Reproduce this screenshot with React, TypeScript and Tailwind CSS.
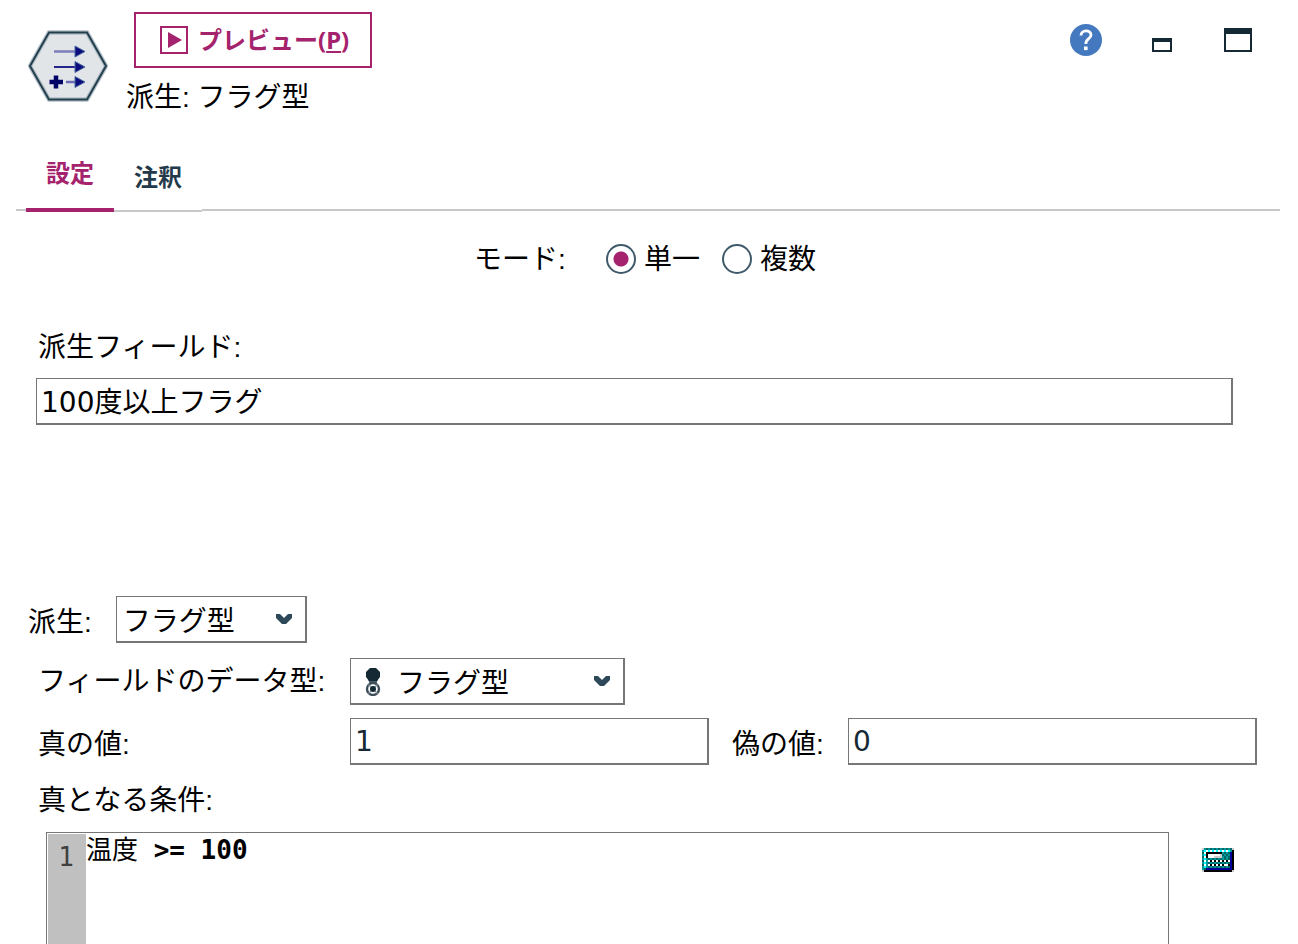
import { useState } from "react";
import type { ReactNode } from "react";

const FIELD =
  "h-[47px] w-full border border-r-2 border-b-2 border-[#767676] bg-white text-[28px] leading-[36px] outline-none";

/* ─── Icons ─── */
function DeriveIcon() {
  return (
    <svg className="h-[72px] w-20 shrink-0" viewBox="0 0 80 72" aria-hidden="true">
      <path d="M21 2.5H59L78 36L59 69.5H21L2 36Z" fill="#e1e5e8" stroke="#b4bec6" strokeWidth="4.500" />
      <path d="M21 2.5H59L78 36L59 69.5H21L2 36Z" fill="none" stroke="#23404f" strokeWidth="2" />
      <path d="M26 21.5H48" stroke="#7c7cba" strokeWidth="2.5" />
      <path d="M26 37H48" stroke="#24248a" strokeWidth="2" />
      <path d="M38 52H48" stroke="#6c6cb4" strokeWidth="2.5" />
      <path d="M47 16L57 21.5L47 27V16ZM47 31.500L57 37L47 42.500V31.500ZM47 46.500L57 52L47 57.500V46.500Z" fill="#0c0c7c" stroke="#4a6aa0" strokeWidth="1" />
      <path d="M21.500 52H35M28 45.500V58.500" stroke="#000066" strokeWidth="4.500" />
    </svg>
  );
}

function PreviewIcon() {
  return (
    <svg className="size-7 shrink-0" viewBox="0 0 28 28" aria-hidden="true">
      <rect x="1" y="1" width="26" height="26" fill="none" stroke="#a5226c" strokeWidth="2" />
      <path d="M8 6L22 14L8 22Z" fill="#a5226c" />
    </svg>
  );
}

function HelpIcon() {
  return (
    <svg className="size-8" viewBox="0 0 32 32" aria-hidden="true">
      <circle cx="16" cy="16" r="16" fill="#4479c0" />
      <path d="M11 11.500C11 5.500 21 5.500 21 11C21 15 15.800 14.500 15.800 20" fill="none" stroke="#fff" strokeWidth="2.800" />
      <rect x="14" y="22.500" width="3.600" height="3.600" fill="#fff" />
    </svg>
  );
}

function Chevron() {
  return (
    <svg className="h-[10px] w-4" viewBox="0 0 16 10" aria-hidden="true">
      <path d="M0 0H4L8 4L12 0H16V4L10 10H6L0 4Z" fill="#2c4859" />
    </svg>
  );
}

function FlagIcon() {
  return (
    <svg className="h-7 w-4" viewBox="0 0 16 28" aria-hidden="true">
      <path d="M3 11H13L11 17H5Z" fill="#4a5c66" />
      <path d="M5 0H11L15 4V9L12 13H4L1 9V4Z" fill="#152935" />
      <circle cx="8" cy="21" r="6" fill="#fff" stroke="#3c4d58" strokeWidth="2.400" />
      <path d="M3.500 16.500L12.500 25.500M12.500 16.500L3.500 25.500" stroke="#8a969e" strokeWidth="1.200" />
      <circle cx="8" cy="21" r="3" fill="#152935" />
    </svg>
  );
}

const CALC_COLORS: Record<string, string> = {
  g: "#cccccc",
  t: "#009999",
  d: "#006666",
  c: "#00ffff",
  w: "#ffffff",
  k: "#000000",
  b: "#000099",
};

// one character per pixel
const CALC_ROWS = [
  "gtdtdtdtdtdtdtdg",
  "tcwcwcwcwcwcwctk",
  "dwkkkkkkkktdtdbk",
  "tckwwwwwwgdtdtbk",
  "dwkwwwggggtdtdbk",
  "tctdtdtdtdtdtdbk",
  "dwtwkwkwkwkwkwbk",
  "tctdtdtdtdtdtdbk",
  "dwtwkwkwkwkwwkbk",
  "tctdtdtdtdtdtdbk",
  "tdbbbbbbbbbbbbbk",
  "gkkkkkkkkkkkkkkg",
];

function CalculatorIcon() {
  return (
    <svg className="h-6 w-8" viewBox="0 0 16 12" shapeRendering="crispEdges" aria-hidden="true">
      {CALC_ROWS.map((row, y) =>
        row.split("").map((c, x) => (
          <rect key={`${x}-${y}`} x={x} y={y} width="1" height="1" fill={CALC_COLORS[c]} />
        )),
      )}
    </svg>
  );
}

/* ─── Controls ─── */
type DropdownProps = {
  id: string;
  icon?: ReactNode;
  className: string;
  selectClass: string;
};

function Dropdown({ id, icon, className, selectClass }: DropdownProps) {
  return (
    <div className={`relative ${className}`}>
      <select id={id} defaultValue="flag" className={`${FIELD} appearance-none pt-[6px] ${selectClass}`}>
        <option value="flag">フラグ型</option>
      </select>
      {icon && <span className="pointer-events-none absolute top-[10px] left-[15px]">{icon}</span>}
      <span className="pointer-events-none absolute top-[18px] right-[15px] flex">
        <Chevron />
      </span>
    </div>
  );
}

type ModeProps = {
  label: string;
  checked: boolean;
  onSelect: () => void;
};

function ModeRadio({ label, checked, onSelect }: ModeProps) {
  return (
    <label className="flex items-start gap-2">
      <input
        type="radio"
        name="mode"
        checked={checked}
        onChange={onSelect}
        className="mt-1 size-[30px] appearance-none rounded-full border-2 border-[#3f5a6b] bg-white checked:bg-[radial-gradient(circle,#a5226c_7px,transparent_8px)]"
      />
      {label}
    </label>
  );
}

export default function App() {
  const [mode, setMode] = useState("single");

  return (
    <div className="flex h-screen flex-col overflow-hidden bg-white font-['Liberation_Sans','Noto_Sans_CJK_JP',sans-serif] text-[28px] leading-[40px] text-black">
      {/* Header */}
      <header className="flex items-start pt-3 pr-[46px] pl-7">
        <div className="pt-[18px]">
          <DeriveIcon />
        </div>
        <div className="ml-[18px]">
          <button
            type="button"
            className="ml-2 flex h-14 items-center gap-[10px] border-2 border-[#a5226c] pr-[21px] pl-6 font-['Noto_Sans','Noto_Sans_CJK_JP',sans-serif] text-[24px] leading-[32px] font-bold text-[#a5226c]"
          >
            <PreviewIcon />
            <span>
              プレビュー(<span className="underline decoration-2 underline-offset-2">P</span>)
            </span>
          </button>
          <h1 className="mt-[10px]">派生: フラグ型</h1>
        </div>
        <div className="ml-auto flex items-start pt-3">
          <button type="button" aria-label="ヘルプ">
            <HelpIcon />
          </button>
          <button type="button" aria-label="最小化" className="ml-[50px] pt-[14px]">
            <span className="block h-[14px] w-5 border-2 border-t-4 border-[#152935]" />
          </button>
          <button type="button" aria-label="最大化" className="ml-[52px] pt-1">
            <span className="block h-6 w-7 border-2 border-t-[6px] border-[#152935]" />
          </button>
        </div>
      </header>

      {/* Tabs */}
      <div
        className="mt-[30px] mr-[18px] ml-4 flex shrink-0 items-end font-['Noto_Sans_CJK_JP',sans-serif] text-[24px] leading-[32px] font-bold"
        role="tablist"
      >
        <span className="mb-px h-[2px] w-[10px] bg-[#c8c8c8]" />
        <button type="button" role="tab" aria-selected="true" className="h-16 w-[88px] border-b-4 border-[#a5226c] pb-3 text-[#a5226c]">
          設定
        </button>
        <button type="button" role="tab" aria-selected="false" className="h-16 w-[88px] border-b-2 border-[#c8c8c8] pb-[6px] text-[#23394a]">
          注釈
        </button>
        <span className="mb-px h-[2px] flex-1 bg-[#c8c8c8]" />
      </div>

      {/* Mode */}
      <div className="mt-7 flex items-start justify-center pr-2" role="radiogroup" aria-labelledby="mode-label">
        <span id="mode-label" className="mr-10">モード:</span>
        <ModeRadio label="単一" checked={mode === "single"} onSelect={() => setMode("single")} />
        <span className="w-[22px]" />
        <ModeRadio label="複数" checked={mode === "multiple"} onSelect={() => setMode("multiple")} />
      </div>

      {/* Derived field */}
      <div className="mt-12 pr-[65px] pl-9">
        <label htmlFor="field" className="block pl-[2px]">派生フィールド:</label>
        <input
          id="field"
          defaultValue="100度以上フラグ"
          className={`${FIELD} mt-[10px] block px-1 pb-[3px] font-['DejaVu_Sans','Noto_Sans_CJK_JP',sans-serif]`}
        />
      </div>

      {/* Derive as */}
      <div className="mt-[171px] flex shrink-0 items-center pl-7">
        <label htmlFor="derive" className="pt-[6px]">派生:</label>
        <Dropdown id="derive" className="ml-6 w-[191px]" selectClass="pl-[6px]" />
      </div>

      <div className="mt-[15px] grid shrink-0 grid-cols-[312px_359fr_139px_409fr] items-center gap-y-[13px] pr-[41px] pl-[38px]">
        <label htmlFor="data-type">フィールドのデータ型:</label>
        <Dropdown
          id="data-type"
          icon={<FlagIcon />}
          className="col-span-3 w-[275px]"
          selectClass="pl-[46px]"
        />
        <label htmlFor="true-value" className="pt-[6px]">真の値:</label>
        <input
          id="true-value"
          defaultValue="1"
          className={`${FIELD} px-1 font-['DejaVu_Sans',sans-serif] text-[#152935]`}
        />
        <label htmlFor="false-value" className="pt-[6px] pl-[23px]">偽の値:</label>
        <input
          id="false-value"
          defaultValue="0"
          className={`${FIELD} px-1 font-['DejaVu_Sans',sans-serif] text-[#152935]`}
        />
      </div>

      {/* Condition editor */}
      <div id="condition-label" className="mt-4 pl-[38px]">真となる条件:</div>
      <div className="mt-[11px] flex min-h-0 flex-1 pl-[46px]">
        <div className="flex flex-1 border border-b-0 border-[#767676] pt-px pl-px font-['DejaVu_Sans_Mono','Noto_Sans_CJK_JP',monospace] text-[26px] leading-[32px]">
          <div className="w-[38px] bg-[#c0c0c0] pt-[7px] pr-3 text-right text-[#404040]">1</div>
          <div
            role="textbox"
            aria-multiline="true"
            aria-labelledby="condition-label"
            contentEditable
            suppressContentEditableWarning
            className="flex-1 whitespace-pre outline-none"
          >
            温度 <b>{">="} 100</b>
          </div>
        </div>
        <div className="w-[129px] pt-4 pl-[33px]">
          <button type="button" aria-label="式ビルダー" className="block">
            <CalculatorIcon />
          </button>
        </div>
      </div>
    </div>
  );
}
